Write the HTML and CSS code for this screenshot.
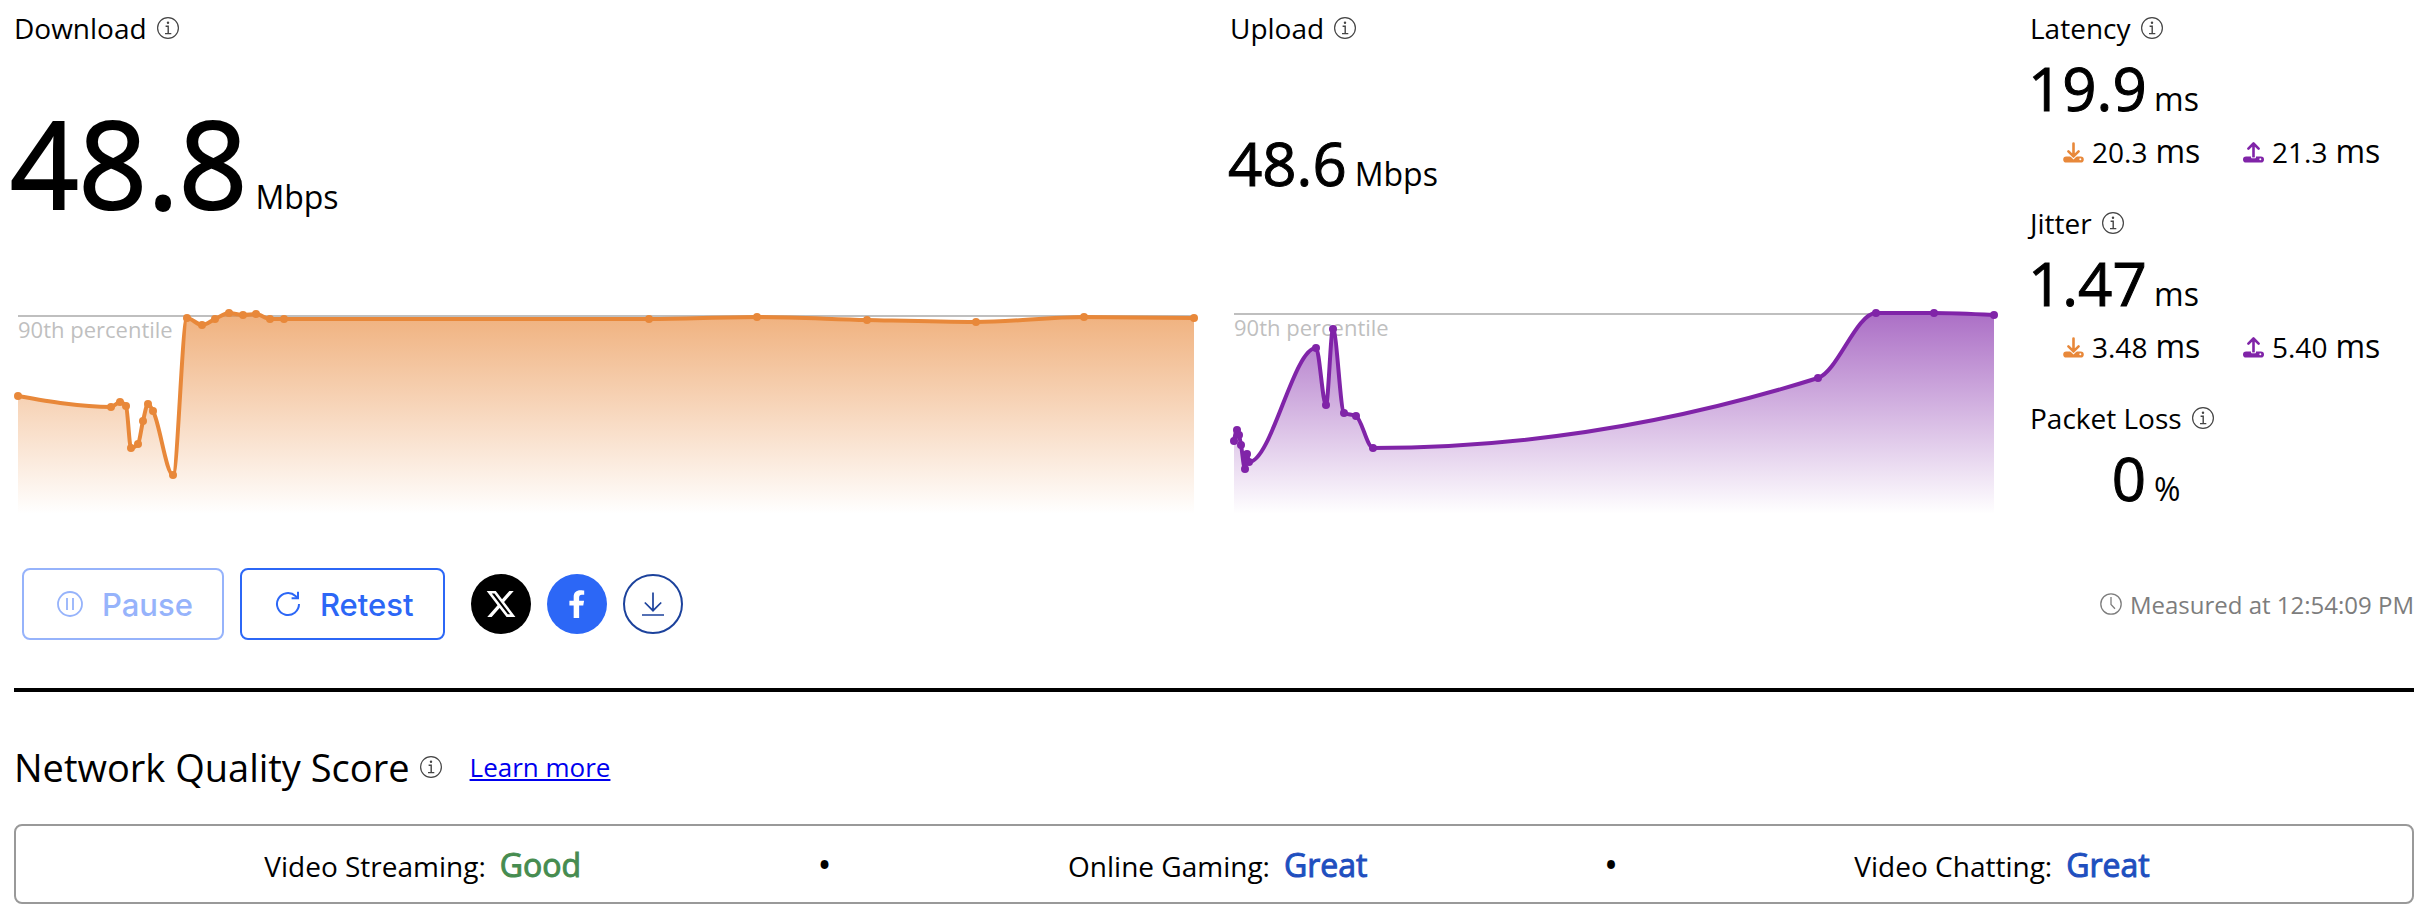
FILE: index.html
```html
<!DOCTYPE html>
<html lang="en">

<head>
    <meta charset="utf-8">
    <title>Speed Test</title>
    <link rel="stylesheet" href="styles.css">
</head>

<body>
    <!-- shared icons -->
    <svg class="sprite" aria-hidden="true">
        <symbol id="icon-info" viewBox="0 0 22 22">
            <circle cx="11" cy="11" r="10.4" fill="none" stroke="currentColor" stroke-width="1.2" />
            <path d="M8.6 9.2h2.6v7.3M8 16.6h6.3" fill="none" stroke="currentColor" stroke-width="1.4" />
            <circle cx="11" cy="5.7" r="1.2" fill="currentColor" />
        </symbol>
        <symbol id="icon-down" viewBox="0 0 21 21">
            <path d="M3.3 14.4h14.4a3.1 3.1 0 0 1 0 6.2h-14.4a3.1 3.1 0 0 1 0-6.2z" fill="currentColor" />
            <path d="M5.6 11.8l4.9 4.9 4.9-4.9" fill="none" stroke="#fff" stroke-width="1.2" />
            <path d="M10.5 1.5v12.5M5.4 9.3l5.1 5.1 5.1-5.1" fill="none" stroke="currentColor" stroke-width="2.6" stroke-linecap="round" stroke-linejoin="round" />
            <circle cx="17.3" cy="17.3" r="1" fill="#fff" />
        </symbol>
        <symbol id="icon-up" viewBox="0 0 21 21">
            <rect x="0" y="14.4" width="21" height="6.2" rx="3.1" fill="currentColor" />
            <path d="M8.5 13.5v2.3h4v-2.3" fill="none" stroke="#fff" stroke-width="1" />
            <path d="M10.5 14v-12.5M5.4 6.6l5.1-5.1 5.1 5.1" fill="none" stroke="currentColor" stroke-width="2.6" stroke-linecap="round" stroke-linejoin="round" />
            <circle cx="17.3" cy="17.3" r="1" fill="#fff" />
        </symbol>
    </svg>

    <main>
        <div class="results">
            <section class="panel">
                <h2 class="title">Download <svg class="info"><use href="#icon-info" /></svg></h2>
                <div class="speed"><span class="value value-large">48.8</span><span class="unit">Mbps</span></div>
                <svg class="chart chart-download" viewBox="0 0 1192 220" data-baseline="16"
                    data-points="4,96 97,107 106,102 112,106 117,148 124,144 129,121 134,104 139,111 159,175 173,18 188,25 201,19 215,13 229,15 242,14 256,19 270,19 635,19 743,17 853,20 962,22 1070,17 1180,18">
                    <defs>
                        <linearGradient id="fill-download" x1="0" y1="0" x2="0" y2="214" gradientUnits="userSpaceOnUse">
                            <stop offset="0" stop-color="#e8883a" stop-opacity="0.7" />
                            <stop offset="1" stop-color="#e8883a" stop-opacity="0" />
                        </linearGradient>
                    </defs>
                    <text x="4" y="38">90th percentile</text>
                </svg>
            </section>
            <section class="panel">
                <h2 class="title">Upload <svg class="info"><use href="#icon-info" /></svg></h2>
                <div class="speed"><span class="value">48.6</span><span class="unit">Mbps</span></div>
                <svg class="chart chart-upload" viewBox="0 0 776 220" data-baseline="14"
                    data-points="4,141 7,130 9,135 11,145 15,169 17,154 19,162 86,48 96,105 103,29 114,113 126,116 143,148 588,78 646,13 704,13 764,15">
                    <defs>
                        <linearGradient id="fill-upload" x1="0" y1="0" x2="0" y2="214" gradientUnits="userSpaceOnUse">
                            <stop offset="0" stop-color="#8024a8" stop-opacity="0.7" />
                            <stop offset="1" stop-color="#8024a8" stop-opacity="0" />
                        </linearGradient>
                    </defs>
                    <text x="4" y="36">90th percentile</text>
                </svg>
            </section>
            <section class="metrics">
                <div class="metric">
                    <h2 class="title">Latency <svg class="info"><use href="#icon-info" /></svg></h2>
                    <div class="reading"><span class="value">19.9</span><span class="unit">ms</span></div>
                    <div class="loaded">
                        <div class="loaded-item"><svg class="down"><use href="#icon-down" /></svg>20.3 <span class="unit">ms</span></div>
                        <div class="loaded-item"><svg class="up"><use href="#icon-up" /></svg>21.3 <span class="unit">ms</span></div>
                    </div>
                </div>
                <div class="metric">
                    <h2 class="title">Jitter <svg class="info"><use href="#icon-info" /></svg></h2>
                    <div class="reading"><span class="value">1.47</span><span class="unit">ms</span></div>
                    <div class="loaded">
                        <div class="loaded-item"><svg class="down"><use href="#icon-down" /></svg>3.48 <span class="unit">ms</span></div>
                        <div class="loaded-item"><svg class="up"><use href="#icon-up" /></svg>5.40 <span class="unit">ms</span></div>
                    </div>
                </div>
                <div class="metric">
                    <h2 class="title">Packet Loss <svg class="info"><use href="#icon-info" /></svg></h2>
                    <div class="reading"><span class="value">0</span><span class="unit">%</span></div>
                </div>
            </section>
        </div>

        <div class="toolbar">
            <button type="button" class="action" disabled>
                <svg viewBox="0 0 26 26" fill="none" stroke="currentColor" stroke-width="1.8">
                    <circle cx="13" cy="13" r="12" />
                    <path d="M10 7v12M16 7v12" />
                </svg>
                Pause
            </button>
            <button type="button" class="action">
                <svg viewBox="0 0 26 26" fill="none" stroke="currentColor" stroke-width="2">
                    <path d="M24 13a11 11 0 1 1-3.5-8L22.5 7" />
                    <path d="M23 .8v6.4h-6.4" />
                </svg>
                Retest
            </button>
            <div class="share">
                <a href="#" class="circle circle-x" aria-label="Share on X">
                    <svg viewBox="0 0 24 24" fill="currentColor">
                        <path d="M18.244 2.25h3.308l-7.227 8.26 8.502 11.24H16.17l-5.214-6.817L4.99 21.75H1.68l7.73-8.835L1.254 2.25H8.08l4.713 6.231zm-1.161 17.52h1.833L7.084 4.126H5.117z" />
                    </svg>
                </a>
                <a href="#" class="circle circle-facebook" aria-label="Share on Facebook">
                    <svg viewBox="0 0 24 24" fill="currentColor">
                        <path d="M9.5 22.5V13.2H6.3V9.5h3.2V6.6C9.5 3.2 11.5 1.6 14.6 1.6c1.5 0 2.8.2 2.8.2v3.2h-1.7c-1.6 0-2.1 1-2.1 2v2.5h3.7l-.6 3.7h-3.1v9.3z" />
                    </svg>
                </a>
                <button type="button" class="circle circle-save" aria-label="Download results">
                    <svg viewBox="0 0 24 24" fill="none" stroke="currentColor" stroke-width="1.7">
                        <path d="M12 .5v18M3.8 10.5l8.2 8.2 8.2-8.2M1 23h22" />
                    </svg>
                </button>
            </div>
            <div class="measured">
                <svg viewBox="0 0 22 22" fill="none" stroke="currentColor" stroke-width="1.3">
                    <circle cx="11" cy="11" r="10.2" />
                    <path d="M11 4v7.5l4 4.2" />
                </svg>
                Measured at 12:54:09 PM
            </div>
        </div>

        <section class="quality">
            <div class="quality-head">
                <h1>Network Quality Score</h1>
                <svg class="info"><use href="#icon-info" /></svg>
                <a href="#">Learn more</a>
            </div>
            <div class="scores">
                <div class="score">Video Streaming: <span class="good">Good</span></div>
                <span class="dot-sep">•</span>
                <div class="score">Online Gaming: <span class="great">Great</span></div>
                <span class="dot-sep">•</span>
                <div class="score">Video Chatting: <span class="great">Great</span></div>
            </div>
        </section>
    </main>
    <script src="chart.js"></script>
</body>

</html>
```
FILE: styles.css
```css
* {
    box-sizing: border-box;
}

body {
    margin: 0;
    background: #fff;
    color: #000;
    font-family: "Open Sans", "Noto Sans", sans-serif;
    font-size: 28px;
}

main {
    padding: 8px 16px 12px 14px;
}

h1,
h2 {
    margin: 0;
    font-weight: 400;
}

.sprite {
    display: none;
}

.results {
    display: grid;
    grid-template-columns: 38fr 25fr 12fr;
}

.panel {
    display: flex;
    flex-direction: column;
    padding-right: 24px;
}

/*titles*/

.title {
    display: flex;
    align-items: center;
    gap: 10px;
    font-size: 28px;
    line-height: 40px;
}

.info {
    width: 22px;
    height: 22px;
    color: #444;
}

/*readings*/

.speed {
    display: flex;
    align-items: baseline;
    gap: 8px;
    height: 252px;
    line-height: 230px;
}

.value {
    margin-left: -2px;
    font-size: 60px;
    -webkit-text-stroke: 1px #000;
}

.value-large {
    margin-left: -4px;
    font-size: 120px;
    -webkit-text-stroke-width: 2px;
}

.unit {
    font-size: 32px;
}

.metric {
    height: 195px;
}

.metric:last-child {
    height: auto;
}

.reading {
    display: flex;
    align-items: baseline;
    gap: 8px;
    line-height: 80px;
}

.reading .value {
    width: 118px;
    text-align: right;
    white-space: nowrap;
}

.loaded {
    display: flex;
    gap: 40px;
    margin-top: -10px;
    padding-left: 33px;
    line-height: 44px;
}

.loaded-item {
    display: flex;
    align-items: baseline;
    gap: 8px;
    width: 140px;
    white-space: nowrap;
}

.loaded-item svg {
    width: 21px;
    height: 21px;
    flex: none;
}

.down {
    color: #e8883a;
}

.up {
    color: #8024a8;
}

/*charts*/

.chart {
    display: block;
    width: 100%;
    overflow: visible;
}

.chart text {
    font-size: 22px;
    fill: #bfbfbf;
}

.chart .baseline {
    stroke: #bfbfbf;
    stroke-width: 2;
}

.chart .line {
    fill: none;
    stroke-width: 4;
}

.chart-download .line {
    stroke: #e8883a;
}

.chart-download .area {
    fill: url(#fill-download);
}

.chart-download .dot {
    fill: #e8883a;
}

.chart-upload .line {
    stroke: #8024a8;
}

.chart-upload .area {
    fill: url(#fill-upload);
}

.chart-upload .dot {
    fill: #8024a8;
}

/*buttons*/

.toolbar {
    display: flex;
    align-items: center;
    gap: 16px;
    padding: 39px 0 48px 8px;
    border-bottom: 4px solid #000;
}

.action {
    display: flex;
    align-items: center;
    gap: 19px;
    height: 72px;
    padding: 0 29px 0 33px;
    border: 2px solid #2c67f6;
    border-radius: 8px;
    background: #fff;
    color: #2c67f6;
    font-family: Inter, sans-serif;
    font-size: 31px;
    font-weight: 500;
}

.action:disabled {
    border-color: #96b3fb;
    color: #96b3fb;
}

.action svg {
    width: 26px;
    height: 26px;
}

.share {
    display: flex;
    gap: 16px;
    margin-left: 10px;
}

.circle {
    display: flex;
    align-items: center;
    justify-content: center;
    width: 60px;
    height: 60px;
    padding: 0;
    border: 0;
    border-radius: 50%;
    color: #fff;
}

.circle svg {
    width: 32px;
    height: 32px;
}

.circle-x {
    background: #000;
}

.circle-facebook {
    background: #2c67f6;
}

.circle-save {
    border: 2px solid #1c429c;
    background: #fff;
    color: #1c429c;
}

.circle-save svg {
    width: 24px;
    height: 24px;
}

.measured {
    display: flex;
    align-items: center;
    gap: 8px;
    margin-left: auto;
    color: #7d7d7d;
    font-size: 24px;
}

.measured svg {
    width: 22px;
    height: 22px;
}

/*quality*/

.quality-head {
    display: flex;
    align-items: center;
    gap: 10px;
    height: 132px;
    padding: 38px 0 20px;
}

.quality-head h1 {
    font-size: 38px;
}

.quality-head a {
    margin-left: 18px;
    color: #0000ee;
    font-size: 26px;
}

.scores {
    display: flex;
    align-items: center;
    justify-content: center;
    gap: 10%;
    height: 80px;
    padding-right: 14px;
    border: 2px solid #999;
    border-radius: 8px;
}

.score {
    display: flex;
    align-items: baseline;
    gap: 14px;
    white-space: nowrap;
}

.score span {
    font-size: 32px;
    -webkit-text-stroke: 1px currentColor;
}

.dot-sep {
    font-weight: 700;
}

.good {
    color: #468c50;
}

.great {
    color: #1f4fbf;
}
```
FILE: chart.js
```js
var BOTTOM = 214;

function add(svg, tag, attrs) {
    var el = document.createElementNS('http://www.w3.org/2000/svg', tag);
    for (var key in attrs) {
        el.setAttribute(key, attrs[key]);
    }
    svg.appendChild(el);
}

// monotone cubic interpolation
function linePath(p) {
    var n = p.length, s = [], m = [], i;
    for (i = 0; i < n - 1; i++) {
        s[i] = (p[i + 1][1] - p[i][1]) / (p[i + 1][0] - p[i][0]);
    }
    for (i = 1; i < n - 1; i++) {
        var h0 = p[i][0] - p[i - 1][0], h1 = p[i + 1][0] - p[i][0];
        var avg = (s[i - 1] * h1 + s[i] * h0) / (h0 + h1);
        m[i] = (Math.sign(s[i - 1]) + Math.sign(s[i])) *
            Math.min(Math.abs(s[i - 1]), Math.abs(s[i]), Math.abs(avg) / 2);
    }
    m[0] = (3 * s[0] - m[1]) / 2;
    m[n - 1] = (3 * s[n - 2] - m[n - 2]) / 2;
    var d = 'M' + p[0];
    for (i = 0; i < n - 1; i++) {
        var dx = (p[i + 1][0] - p[i][0]) / 3;
        d += 'C' + [p[i][0] + dx, p[i][1] + dx * m[i],
            p[i + 1][0] - dx, p[i + 1][1] - dx * m[i + 1], p[i + 1][0], p[i + 1][1]];
    }
    return d;
}

document.querySelectorAll('.chart').forEach(function (svg) {
    var points = svg.dataset.points.trim().split(/\s+/).map(function (pair) {
        return pair.split(',').map(Number);
    });
    var first = points[0][0], last = points[points.length - 1][0];
    var y = svg.dataset.baseline;
    var d = linePath(points);

    add(svg, 'line', { 'class': 'baseline', x1: first, x2: last, y1: y, y2: y });
    add(svg, 'path', { 'class': 'area', d: d + 'V' + BOTTOM + 'H' + first + 'Z' });
    add(svg, 'path', { 'class': 'line', d: d });
    points.forEach(function (p) {
        add(svg, 'circle', { 'class': 'dot', cx: p[0], cy: p[1], r: 4 });
    });
});
```
